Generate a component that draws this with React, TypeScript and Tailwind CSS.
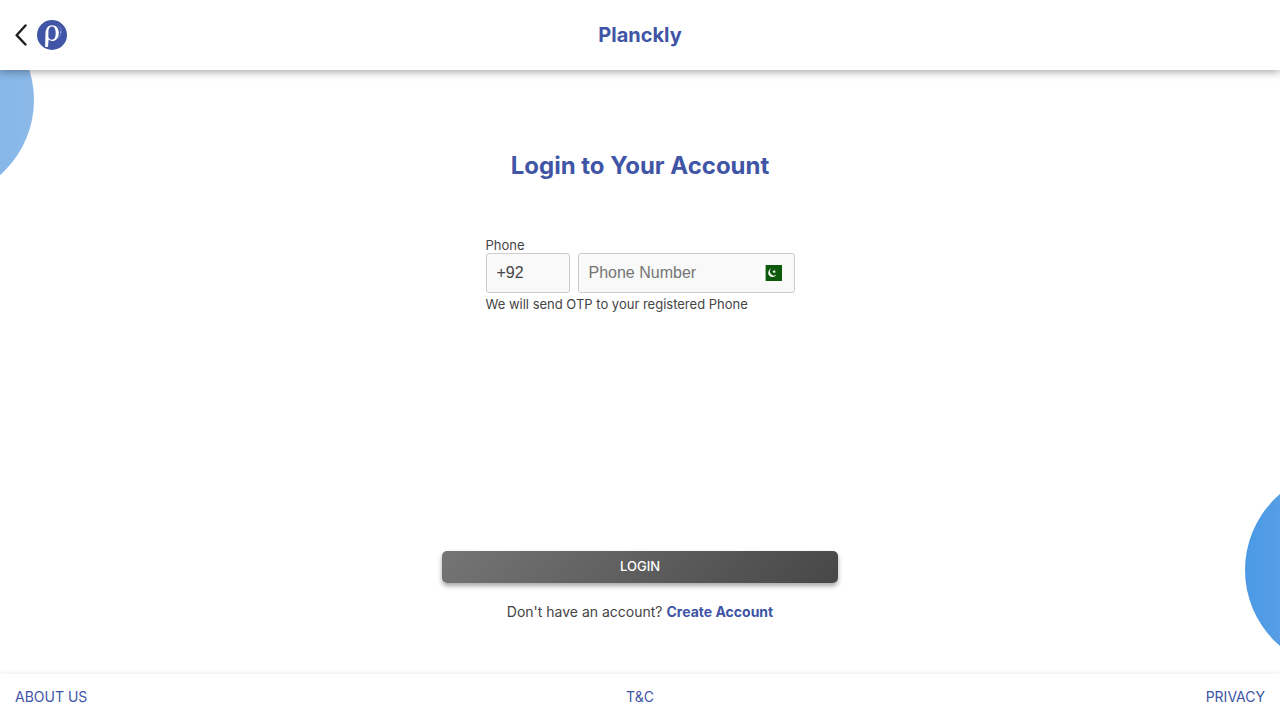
import { useState } from "react";

function BackIcon() {
  return (
    <svg width="12" height="24" viewBox="0 0 12 24" fill="none" aria-hidden="true">
      <path d="M10.5 2.5 1.6 12.2l8.9 9.3" stroke="#1f1f1f" strokeWidth="2.4" strokeLinecap="round" strokeLinejoin="round" />
    </svg>
  );
}

function Logo() {
  return (
    <svg width="30" height="30" viewBox="0 0 30 30" role="img" aria-label="Planckly logo">
      <circle cx="15" cy="15" r="15" fill="#4055a5" />
      <path
        fill="#fff"
        fillRule="evenodd"
        d="M8.1 26.8 8.5 13C8.6 8.6 11 5.2 15.2 5.2c4.3 0 6.6 3.3 6.6 7.7 0 4.8-2.7 8.1-6.6 8.1-1.6 0-2.8-.5-3.6-1.4L11.1 26.5c-.8.6-2 .7-3 .3ZM15 6.4c-2.5 0-3.6 2.5-3.6 5.8v5c.5 1.6 1.7 2.5 3.3 2.5 2.7 0 4-2.6 4-6.7 0-4.1-1.4-6.6-3.7-6.6Z"
      />
      <path d="M20.5 5.3c3.2 1.8 4.6 5.2 3.2 8.7-.6 1.8-1.5 3.1-2.8 4.2" fill="none" stroke="#8f9bd0" strokeWidth=".6" />
      <circle cx="23.4" cy="12" r=".6" fill="#fff" />
    </svg>
  );
}

function Flag() {
  return (
    <svg width="21" height="16" viewBox="0 0 21 16" role="img" aria-label="Pakistan">
      <path fill="#fff" d="M0 0h5v16H0z" />
      <path fill="#0c590b" d="M4.6 0H21v16H4.6z" />
      <path fill="#fff" d="M10.4 3.6a4.3 4.3 0 1 0 5 6 3.5 3.5 0 1 1-5-6Z" />
      <path fill="#fff" d="m13.2 4.6.4 1.3 1.3-.1-.9 1 .4 1.1-1.1-.4-1 .7.1-1.2-1.1-.6 1.3-.4z" />
    </svg>
  );
}

export default function App() {
  const [code, setCode] = useState("+92");
  const [phone, setPhone] = useState("");

  return (
    <div className="relative flex min-h-screen flex-col overflow-hidden bg-white font-['Inter',sans-serif] text-[#444]">
      <div className="absolute top-0 -left-[166px] size-[200px] rounded-full bg-linear-to-r from-[#6aacec] to-[#8cb9e8]" />
      <div className="absolute -right-[165px] bottom-[50px] size-[200px] rounded-full bg-linear-to-r from-[#4b99e5] to-[#84b6ea]" />

      <header className="relative grid h-[70px] grid-cols-[1fr_auto_1fr] items-center bg-white px-[15px] shadow-[0_2px_8px_rgba(0,0,0,0.35)]">
        <div className="flex items-center gap-[10px]">
          <button type="button" aria-label="Back">
            <BackIcon />
          </button>
          <Logo />
        </div>
        <span className="text-xl font-bold text-[#4055a5]">Planckly</span>
      </header>

      <main className="relative flex flex-1 flex-col items-center pt-20">
        <h1 className="text-2xl font-bold text-[#4055a5]">Login to Your Account</h1>
        <form className="flex w-full flex-1 flex-col items-center" onSubmit={(e) => e.preventDefault()}>
          <div className="mt-[55px] w-[309px] text-[13px] leading-4">
            <label htmlFor="phone" className="block">Phone</label>
            <div className="flex gap-2 font-['Liberation_Sans',sans-serif] text-base">
              <input
                aria-label="Country code"
                value={code}
                onChange={(e) => setCode(e.target.value)}
                className="h-10 w-[84px] rounded-[3px] border border-[#ccc] bg-[#f9f9f9] px-[10px] outline-none"
              />
              <div className="flex h-10 min-w-0 flex-1 items-center rounded-[3px] border border-[#ccc] bg-[#f9f9f9] pr-3 pl-[10px]">
                <input
                  id="phone"
                  type="tel"
                  placeholder="Phone Number"
                  value={phone}
                  onChange={(e) => setPhone(e.target.value)}
                  className="min-w-0 flex-1 bg-transparent outline-none placeholder:text-[#757575]"
                />
                <Flag />
              </div>
            </div>
            <p className="mt-[3px]">We will send OTP to your registered Phone</p>
          </div>

          <button
            type="submit"
            className="mt-auto h-8 w-full max-w-[396px] rounded-[5px] bg-linear-[135deg] from-[#757575] to-[#474747] text-[13px] font-medium text-white shadow-[0_3px_5px_rgba(0,0,0,0.35)]"
          >
            LOGIN
          </button>
          <p className="mt-5 mb-[53px] text-sm leading-[18px]">
            Don't have an account?{" "}
            <a href="#signup" className="font-bold text-[#4055a5]">Create Account</a>
          </p>
        </form>
      </main>

      <footer className="relative grid h-[46px] grid-cols-[1fr_auto_1fr] items-center bg-white px-[15px] text-sm text-[#4055a5] shadow-[0_-1px_4px_rgba(0,0,0,0.08)]">
        <a href="#about" className="justify-self-start">ABOUT US</a>
        <a href="#terms">T&amp;C</a>
        <a href="#privacy" className="justify-self-end">PRIVACY</a>
      </footer>
    </div>
  );
}
